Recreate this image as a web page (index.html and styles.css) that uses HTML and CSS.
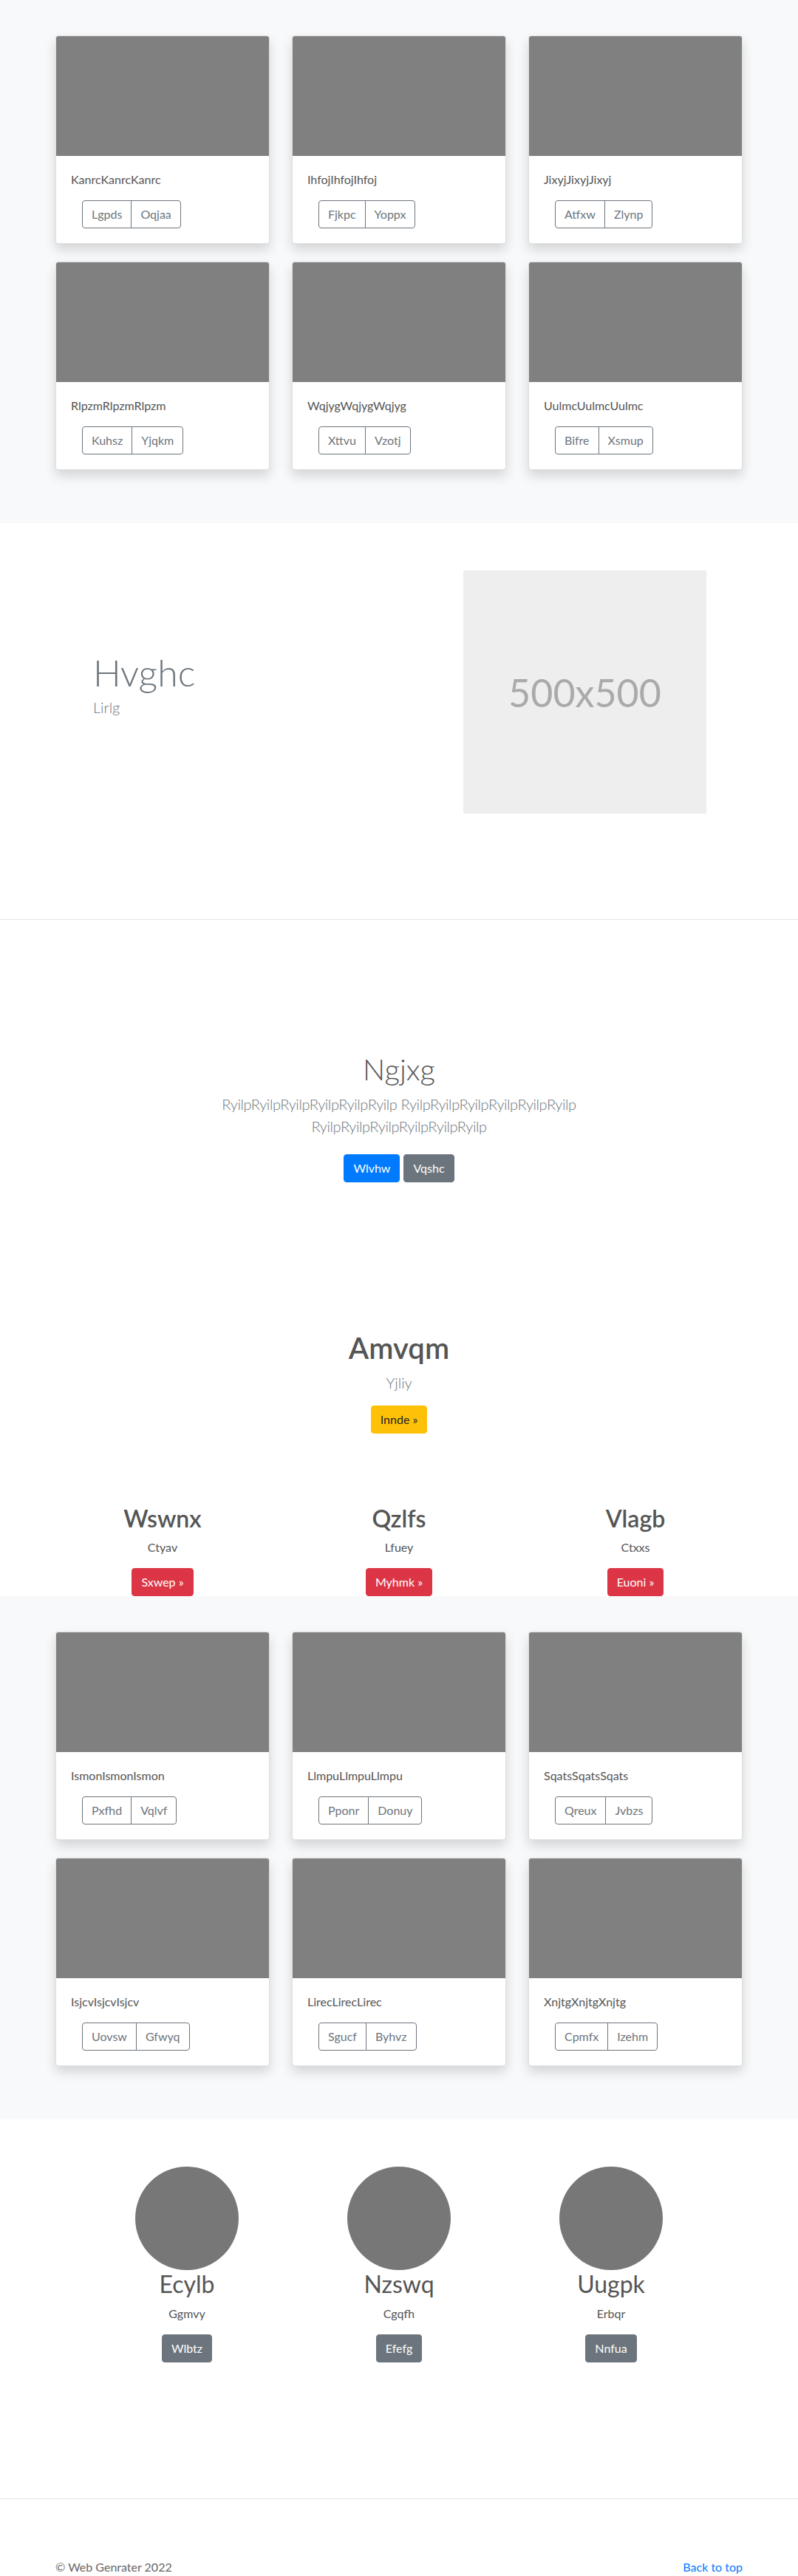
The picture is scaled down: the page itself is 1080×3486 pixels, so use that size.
FILE: index.html
```html
<!DOCTYPE html>
<html lang="en">
<head>
<meta charset="utf-8">
<title>Web Genrater</title>
<link rel="stylesheet" href="styles.css">
</head>
<body>

<section class="album">
  <div class="container card-grid">
    <div class="card"><div class="card-img"></div><div class="card-body"><p class="card-text">KanrcKanrcKanrc</p><div class="btn-group"><button class="btn btn-outline">Lgpds</button><button class="btn btn-outline">Oqjaa</button></div></div></div>
    <div class="card"><div class="card-img"></div><div class="card-body"><p class="card-text">IhfojIhfojIhfoj</p><div class="btn-group"><button class="btn btn-outline">Fjkpc</button><button class="btn btn-outline">Yoppx</button></div></div></div>
    <div class="card"><div class="card-img"></div><div class="card-body"><p class="card-text">JixyjJixyjJixyj</p><div class="btn-group"><button class="btn btn-outline">Atfxw</button><button class="btn btn-outline">Zlynp</button></div></div></div>
    <div class="card"><div class="card-img"></div><div class="card-body"><p class="card-text">RlpzmRlpzmRlpzm</p><div class="btn-group"><button class="btn btn-outline">Kuhsz</button><button class="btn btn-outline">Yjqkm</button></div></div></div>
    <div class="card"><div class="card-img"></div><div class="card-body"><p class="card-text">WqjygWqjygWqjyg</p><div class="btn-group"><button class="btn btn-outline">Xttvu</button><button class="btn btn-outline">Vzotj</button></div></div></div>
    <div class="card"><div class="card-img"></div><div class="card-body"><p class="card-text">UulmcUulmcUulmc</p><div class="btn-group"><button class="btn btn-outline">Bifre</button><button class="btn btn-outline">Xsmup</button></div></div></div>
  </div>
</section>

<section class="feature">
  <div class="feature-text">
    <h1 class="feature-title">Hvghc</h1>
    <p class="feature-sub">Lirlg</p>
  </div>
  <div class="placeholder">500x500</div>
</section>

<hr class="rule">

<section class="jumbo">
  <h1 class="jumbo-title">Ngjxg</h1>
  <p class="lead jumbo-lead">RyilpRyilpRyilpRyilpRyilpRyilp RyilpRyilpRyilpRyilpRyilpRyilp RyilpRyilpRyilpRyilpRyilpRyilp</p>
  <div class="jumbo-btns">
    <a class="btn btn-primary" href="#">Wlvhw</a>
    <a class="btn btn-secondary" href="#">Vqshc</a>
  </div>
</section>

<section class="cta">
  <h1 class="cta-title">Amvqm</h1>
  <p class="lead cta-lead">Yjliy</p>
  <a class="btn btn-warning" href="#">Innde &raquo;</a>
</section>

<section class="three">
  <div class="three-grid">
    <div class="three-col"><h2 class="three-title">Wswnx</h2><p class="three-text">Ctyav</p><a class="btn btn-danger" href="#">Sxwep &raquo;</a></div>
    <div class="three-col"><h2 class="three-title">Qzlfs</h2><p class="three-text">Lfuey</p><a class="btn btn-danger" href="#">Myhmk &raquo;</a></div>
    <div class="three-col"><h2 class="three-title">Vlagb</h2><p class="three-text">Ctxxs</p><a class="btn btn-danger" href="#">Euoni &raquo;</a></div>
  </div>
</section>

<section class="album">
  <div class="container card-grid">
    <div class="card"><div class="card-img"></div><div class="card-body"><p class="card-text">IsmonIsmonIsmon</p><div class="btn-group"><button class="btn btn-outline">Pxfhd</button><button class="btn btn-outline">Vqlvf</button></div></div></div>
    <div class="card"><div class="card-img"></div><div class="card-body"><p class="card-text">LlmpuLlmpuLlmpu</p><div class="btn-group"><button class="btn btn-outline">Pponr</button><button class="btn btn-outline">Donuy</button></div></div></div>
    <div class="card"><div class="card-img"></div><div class="card-body"><p class="card-text">SqatsSqatsSqats</p><div class="btn-group"><button class="btn btn-outline">Qreux</button><button class="btn btn-outline">Jvbzs</button></div></div></div>
    <div class="card"><div class="card-img"></div><div class="card-body"><p class="card-text">IsjcvIsjcvIsjcv</p><div class="btn-group"><button class="btn btn-outline">Uovsw</button><button class="btn btn-outline">Gfwyq</button></div></div></div>
    <div class="card"><div class="card-img"></div><div class="card-body"><p class="card-text">LirecLirecLirec</p><div class="btn-group"><button class="btn btn-outline">Sgucf</button><button class="btn btn-outline">Byhvz</button></div></div></div>
    <div class="card"><div class="card-img"></div><div class="card-body"><p class="card-text">XnjtgXnjtgXnjtg</p><div class="btn-group"><button class="btn btn-outline">Cpmfx</button><button class="btn btn-outline">Izehm</button></div></div></div>
  </div>
</section>

<section class="marketing">
  <div class="marketing-grid">
    <div class="person"><div class="avatar"></div><h2 class="person-name">Ecylb</h2><p class="person-role">Ggmvy</p><a class="btn btn-secondary" href="#">Wlbtz</a></div>
    <div class="person"><div class="avatar"></div><h2 class="person-name">Nzswq</h2><p class="person-role">Cgqfh</p><a class="btn btn-secondary" href="#">Efefg</a></div>
    <div class="person"><div class="avatar"></div><h2 class="person-name">Uugpk</h2><p class="person-role">Erbqr</p><a class="btn btn-secondary" href="#">Nnfua</a></div>
  </div>
</section>

<hr class="rule">

<footer class="footer">
  <div class="container footer-row">
    <p class="copy">&copy; Web Genrater 2022</p>
    <a class="top-link" href="#">Back to top</a>
  </div>
</footer>

</body>
</html>
```

FILE: styles.css
```css
* { box-sizing: border-box; }

body {
  margin: 0;
  font-family: Lato, "Open Sans", "Liberation Sans", sans-serif;
  font-size: 16px;
  line-height: 1.5;
  color: #555;
  background: #fff;
}

h1, h2, p { margin: 0; }

.container {
  width: 930px;
  margin: 0 auto;
}

/* Album sections */
.album {
  background: #f8f9fa;
  padding: 48px 0 72px;
}

.card-grid {
  display: grid;
  grid-template-columns: repeat(3, 290px);
  column-gap: 30px;
  row-gap: 24px;
}

.card {
  height: 282px;
  background: #fff;
  border: 1px solid rgba(0, 0, 0, 0.125);
  border-radius: 4px;
  box-shadow: 0 8px 16px rgba(0, 0, 0, 0.15);
  overflow: hidden;
}

.card-img {
  height: 162px;
  background: #808080;
}

.card-body { padding: 20px; }

.card-text { margin-bottom: 16px; }

/* Buttons */
.btn {
  display: inline-block;
  font-family: inherit;
  font-size: 16px;
  font-weight: 400;
  line-height: 24px;
  padding: 6px 12px;
  border: 1px solid transparent;
  border-radius: 4px;
  text-decoration: none;
  cursor: pointer;
}

.btn-group {
  display: inline-flex;
  margin-left: 15px;
}

.btn-outline {
  color: #6c757d;
  background: transparent;
  border-color: #6c757d;
}

.btn-group .btn:first-child {
  border-top-right-radius: 0;
  border-bottom-right-radius: 0;
}

.btn-group .btn + .btn {
  margin-left: -1px;
  border-top-left-radius: 0;
  border-bottom-left-radius: 0;
}

.btn-primary { background: #007bff; border-color: #007bff; color: #fff; }
.btn-secondary { background: #6c757d; border-color: #6c757d; color: #fff; }
.btn-warning { background: #ffc107; border-color: #ffc107; color: #212529; }
.btn-danger { background: #dc3545; border-color: #dc3545; color: #fff; }

/* Feature */
.feature {
  display: flex;
  justify-content: space-between;
  align-items: flex-start;
  padding: 64px 124px 143px 126px;
}

.feature-text { margin-top: 108px; }

.feature-title {
  font-size: 50px;
  font-weight: 300;
  line-height: 60px;
  color: #6c757d;
  margin-bottom: 2px;
}

.feature-sub {
  font-size: 20px;
  font-weight: 300;
  line-height: 30px;
  color: #6c757d;
}

.placeholder {
  width: 329px;
  height: 329px;
  background: #eee;
  color: #aaa;
  font-size: 52px;
  display: flex;
  align-items: center;
  justify-content: center;
}

.rule {
  margin: 0;
  border: 0;
  border-top: 1px solid rgba(0, 0, 0, 0.1);
}

/* Jumbo */
.jumbo {
  padding-top: 178px;
  text-align: center;
}

.jumbo-title {
  font-size: 40px;
  font-weight: 300;
  line-height: 48px;
  margin-bottom: 8px;
}

.lead {
  font-size: 20px;
  font-weight: 300;
  line-height: 30px;
  color: #6c757d;
}

.jumbo-lead {
  max-width: 610px;
  margin: 0 auto;
  letter-spacing: -0.4px;
}

.jumbo-btns {
  margin-top: 23px;
  display: flex;
  justify-content: center;
  gap: 5px;
}

/* CTA */
.cta {
  padding-top: 200px;
  text-align: center;
}

.cta-title {
  font-size: 40px;
  font-weight: 600;
  line-height: 48px;
  margin-bottom: 8px;
}

.cta-lead { margin-bottom: 16px; }

/* Three columns */
.three { padding-top: 96px; }

.three-grid {
  width: 960px;
  margin: 0 auto;
  display: grid;
  grid-template-columns: repeat(3, 1fr);
}

.three-col { text-align: center; }

.three-title {
  font-size: 32px;
  font-weight: 600;
  line-height: 38.4px;
  margin-bottom: 8px;
}

.three-text { margin-bottom: 16px; }

/* Marketing */
.marketing { padding: 64px 0 184px; }

.marketing-grid {
  width: 861px;
  margin: 0 auto;
  display: grid;
  grid-template-columns: repeat(3, 1fr);
}

.person {
  display: flex;
  flex-direction: column;
  align-items: center;
}

.avatar {
  width: 140px;
  height: 140px;
  border-radius: 50%;
  background: #777;
}

.person-name {
  font-size: 32px;
  font-weight: 400;
  line-height: 38.4px;
  margin-bottom: 8px;
}

.person-role { margin-bottom: 16px; }

/* Footer */
.footer { padding: 80px 0 48px; }

.footer-row {
  display: flex;
  justify-content: space-between;
}

.copy { color: #666; }

.top-link {
  color: #007bff;
  text-decoration: none;
}
```
